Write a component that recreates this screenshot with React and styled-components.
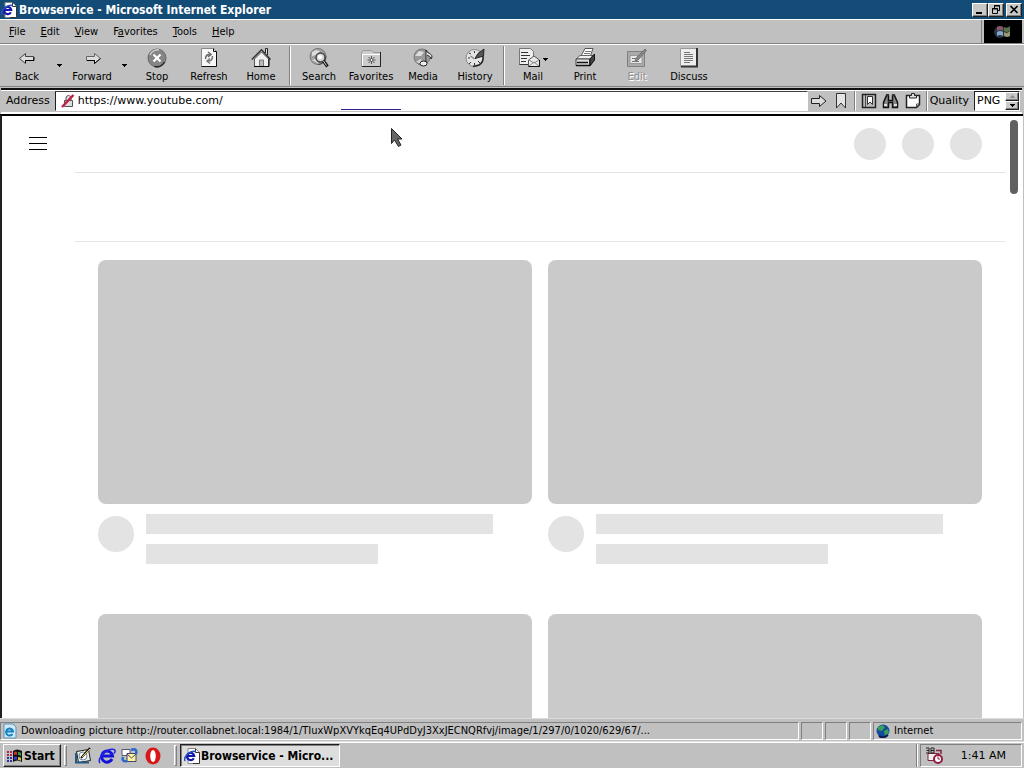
import React from "react";
import styled, { createGlobalStyle, css } from "styled-components";

const condensed = `"DejaVu Sans Condensed", "DejaVu Sans", sans-serif`;
const wide = `"DejaVu Sans", sans-serif`;

const Global = createGlobalStyle`
  * { box-sizing: border-box; }
  body { margin: 0; background: #c0c0c0; color: #000; }
  body, button, input, select {
    font-family: ${condensed};
    font-size: 11px;
    line-height: 14px;
  }
  button { appearance: none; border: 0; padding: 0; margin: 0; background: none; color: inherit; }
  svg { display: block; flex: none; }
`;

const raised = css`
  border: 1px solid;
  border-color: #fff #202020 #202020 #fff;
  box-shadow: inset -1px -1px #808080;
`;

const Desktop = styled.div`
  height: 100vh;
  min-height: 480px;
  display: flex;
  flex-direction: column;
  overflow: hidden;
`;

/* Title bar */
const TitleBar = styled.header`
  flex: none;
  display: flex;
  align-items: center;
  gap: 2px;
  height: 19px;
  padding: 0 2px 0 1px;
  background: #144c78;
  color: #fff;
`;
const Title = styled.h1`
  flex: 1;
  margin: 0;
  font-size: 12px;
  line-height: 18px;
  font-weight: bold;
  white-space: nowrap;
`;
const WindowButtons = styled.div`
  display: flex;
`;
const WindowButton = styled.button`
  display: grid;
  place-items: center;
  width: 16px;
  height: 14px;
  background: #c8c8c8;
  margin-left: ${(p) => (p.$apart ? "2px" : "0")};
  ${raised}
`;

/* Menu */
const MenuRow = styled.div`
  flex: none;
  display: flex;
  height: 25px;
  border-top: 1px solid #fff;
  border-bottom: 1px solid #808080;
`;
const Menu = styled.nav`
  flex: 1;
  display: flex;
  align-items: center;
  gap: 15px;
  padding: 0 9px;
  border-right: 1px solid #808080;
  margin-right: 2px;
`;
const Throbber = styled.div`
  width: 38px;
  margin-right: 2px;
  display: grid;
  place-items: center;
  background: #000;
`;

/* Tool bar */
const ToolBar = styled.div`
  flex: none;
  display: flex;
  height: 43px;
  padding: 1px;
  border-top: 1px solid #fff;
  border-bottom: 1px solid #808080;
`;
const Tool = styled.button`
  position: relative;
  width: 52px;
  display: flex;
  flex-direction: column;
  align-items: center;
  gap: 2px;
  padding-top: 2px;
  color: ${(p) => (p.disabled ? "#909090" : "#000")};
  text-shadow: ${(p) => (p.disabled ? "1px 1px #fff" : "none")};
`;
const DropButton = styled.button`
  width: 13px;
  display: grid;
  place-items: center;
`;
const MailArrow = styled.span`
  position: absolute;
  right: 11px;
  top: 12px;
`;
const Divider = styled.span`
  flex: none;
  width: 2px;
  margin: 0 2px;
  border-left: 1px solid #808080;
  border-right: 1px solid #fff;
`;

/* Address bar */
const AddressBar = styled.form`
  flex: none;
  display: flex;
  align-items: stretch;
  height: 26px;
  margin: 1px 2px 0 1px;
  padding: 1px 2px 1px 5px;
  border-top: 2px solid #101010;
  border-bottom: 2px solid #fff;
  box-shadow: inset 0 1px #fff;
`;
const WideLabel = styled.label`
  display: flex;
  align-items: center;
  font-family: ${wide};
  padding-right: 5px;
`;
const Field = styled.div`
  position: relative;
  flex: 1;
  display: flex;
  align-items: center;
  gap: 3px;
  padding-left: 5px;
  background: #fff;
  border: 1px solid;
  border-color: #404040 #fff #fff #202020;
`;
const UrlInput = styled.input`
  flex: 1;
  min-width: 0;
  border: 0;
  padding: 0;
  background: none;
  outline: none;
  color: #000;
  font-family: ${wide};
`;
const LoadMark = styled.span`
  position: absolute;
  left: 38%;
  bottom: 0;
  width: 8%;
  height: 1px;
  background: #2c1c90;
`;
const IconButton = styled.button`
  width: 22px;
  display: grid;
  place-items: center;
`;
const Quality = styled.div`
  display: flex;
  width: 46px;
  background: #fff;
  border: 1px solid;
  border-color: #202020 #fff #fff #202020;
`;
const QualitySelect = styled.select`
  appearance: none;
  flex: 1;
  min-width: 0;
  border: 0;
  padding: 0 0 0 2px;
  background: none;
  color: #000;
  font-family: ${wide};
`;
const Spinner = styled.div`
  width: 14px;
  display: flex;
  flex-direction: column;
  button { flex: 1; display: grid; place-items: center; background: #c8c8c8; ${raised} }
`;

/* Page */
const Viewport = styled.main`
  position: relative;
  flex: 1;
  min-height: 0;
  overflow: hidden;
  margin-right: 1px;
  background: #fff;
  border-top: 2px solid #000;
  border-left: 2px solid #202020;
`;
const PageHead = styled.div`
  display: flex;
  align-items: center;
  justify-content: space-between;
  height: 56px;
  padding: 0 41px 0 24px;
`;
const HeadDots = styled.div`
  display: flex;
  gap: 16px;
`;
const Dot = styled.span`
  flex: none;
  width: ${(p) => p.$size}px;
  height: ${(p) => p.$size}px;
  border-radius: 50%;
  background: #e3e3e3;
`;
const Chips = styled.div`
  height: 70px;
  margin: 0 17px 0 73px;
  border-top: 1px solid #e4e4e4;
  border-bottom: 1px solid #e8e8e8;
`;
const Grid = styled.div`
  display: grid;
  grid-template-columns: 1fr 1fr;
  gap: 50px 16px;
  padding: 18px 41px 0 96px;
`;
const Thumb = styled.div`
  aspect-ratio: 16 / 9;
  border-radius: 8px;
  background: #cacaca;
`;
const Meta = styled.div`
  display: flex;
  gap: 12px;
  padding-top: 10px;
  ${Dot} { margin-top: 2px; }
`;
const Lines = styled.div`
  flex: 1;
  display: flex;
  flex-direction: column;
  gap: 10px;
`;
const Line = styled.span`
  height: 20px;
  width: ${(p) => p.$width};
  background: #e3e3e3;
`;
const ScrollThumb = styled.div`
  position: absolute;
  top: 4px;
  right: 5px;
  width: 8px;
  height: 74px;
  border-radius: 4px;
  background: #606060;
`;
const Pointer = styled.div`
  position: absolute;
  left: 38%;
  top: 11px;
`;

/* Status bar */
const StatusBar = styled.footer`
  flex: none;
  display: flex;
  gap: 2px;
  height: 24px;
  padding: 3px 2px 1px 0;
  border-top: 1px solid #dcdcdc;
  border-bottom: 1px solid #e0e0e0;
`;
const StatusCell = styled.div`
  display: flex;
  align-items: center;
  gap: 4px;
  flex: ${(p) => (p.$grow ? "1 1 0" : "none")};
  min-width: 0;
  width: ${(p) => (p.$width ? p.$width + "px" : "auto")};
  padding-left: 2px;
  white-space: nowrap;
  overflow: hidden;
  border: 1px solid;
  border-color: #808080 #fff #fff #808080;
`;

/* Task bar */
const TaskBar = styled.footer`
  flex: none;
  display: flex;
  align-items: stretch;
  height: 26px;
  padding: 1px 2px 1px 3px;
  border-top: 1px solid #fff;
`;
const StartButton = styled.button`
  width: 58px;
  display: flex;
  align-items: center;
  gap: 1px;
  padding: 1px 0 0 3px;
  font-size: 12px;
  font-weight: bold;
  ${raised}
`;
const Grip = styled.span`
  width: 3px;
  margin: 1px 3px;
  border: 1px solid;
  border-color: #fff #808080 #808080 #fff;
`;
const QuickLaunch = styled.div`
  display: flex;
  padding: 0 7px 0 2px;
  button { width: 23px; display: grid; place-items: center; }
`;
const TaskButton = styled.button`
  width: 160px;
  display: flex;
  align-items: center;
  gap: 1px;
  padding: 1px 0 0 3px;
  font-size: 12px;
  font-weight: bold;
  white-space: nowrap;
  background: #dedede;
  border: 1px solid;
  border-color: #202020 #fff #fff #202020;
  box-shadow: inset 1px 1px #808080;
`;
const Spacer = styled.div`
  flex: 1;
`;
const Tray = styled.div`
  width: 102px;
  display: flex;
  align-items: center;
  justify-content: space-between;
  padding: 0 15px 0 4px;
  font-family: ${wide};
  border: 1px solid;
  border-color: #808080 #fff #fff #808080;
`;

const Svg = ({ w = 20, h = 20, children }) => (
  <svg width={w} height={h} viewBox={`0 0 ${w} ${h}`} fill="none" aria-hidden="true">
    {children}
  </svg>
);

const DownArrow = () => (
  <Svg w={5} h={3}><path d="M0 0h5v1H4v1H3v1H2V2H1V1H0z" fill="#000" /></Svg>
);
const IeIcon = () => (
  <Svg w={16} h={16}>
    <path d="M4 .5h7.500l4 4v11H4z" fill="#fff" stroke="#888" />
    <path d="M11.500.5v4h4v11H9" stroke="#333" />
    <path d="M9.800 10.200A3.600 3.600 0 1 1 10.200 8H4" stroke="#1616a8" strokeWidth="2.200" />
    <path d="M1 13C-1 9 6 2 11.500 3.500" stroke="#2450c0" strokeWidth="1.500" />
  </Svg>
);
const BigE = () => (
  <Svg w={18} h={18}>
    <path d="M14 12A5.500 5.500 0 1 1 14.500 9H5" stroke="#1414d8" strokeWidth="3" />
    <path d="M2 16C-1 12 8 1 16 2.500c2 1 1 3 0 4" stroke="#2222e8" strokeWidth="1.500" />
  </Svg>
);

const icons = {
  Back: <Svg><path d="M2.500 10.500l6-5v3h8v4h-8v3z" fill="#ddd" stroke="#444" /><path d="M8.500 15v-2.500h8.500V9" stroke="#000" /></Svg>,
  Forward: <Svg><path d="M18.500 10.500l-6-5v3h-8v4h8v3z" fill="#ddd" stroke="#666" /><path d="M5 12.500h7.500v3l6-5" stroke="#000" /></Svg>,
  Stop: <Svg><circle cx="10" cy="10" r="9" fill="#858585" stroke="#666" /><path d="M3 7a8 8 0 0 1 9-5" stroke="#ccc" strokeWidth="1.500" /><path d="M6.500 6.500l7 7m0-7l-7 7" stroke="#fff" strokeWidth="2.200" /><path d="M17.500 14a9 9 0 0 1-10 4.500" stroke="#222" strokeWidth="1.500" /></Svg>,
  Refresh: <Svg><path d="M2.500.5h12l3 3v15h-15z" fill="#f8f8f8" stroke="#888" /><path d="M14.500.5v3h3v15h-15" stroke="#111" /><path d="M6.500 11q0-4.500 4-4.500M9 4l3 2.500L9 9" stroke="#666" strokeWidth="1.500" /><path d="M13.500 8q0 5-4 5M11 10.500L8 13l3 2.500" stroke="#777" strokeWidth="1.500" /></Svg>,
  Home: <Svg><path d="M3.500 11v7.500h14V11l-7-7z" fill="#f0f0f0" stroke="#555" /><path d="M.8 11.500L10.500 1.800l9 9.700" stroke="#333" strokeWidth="1.500" /><path d="M14.500 5V.5h2V7" fill="#ddd" stroke="#222" /><path d="M8.500 18v-6h4v6" fill="#bbb" stroke="#777" /><path d="M3 18.500h15V11" stroke="#000" /></Svg>,
  Search: <Svg><circle cx="9" cy="8.500" r="8" fill="#a0a0a0" stroke="#777" /><path d="M3 4l4-2 4 1-3 4-5 1zM3 12l4-1 3 5z" fill="#ddd" /><path d="M17 8.500a8 8 0 0 1-8 8" stroke="#444" /><circle cx="11.500" cy="9.500" r="4.500" fill="#d6d6d6" stroke="#444" strokeWidth="1.500" /><circle cx="11" cy="9" r="2" fill="#fff" /><path d="M14.500 13l4 5.500" stroke="#111" strokeWidth="3" /><path d="M14.500 13l3 4.500" stroke="#ddd" /></Svg>,
  Favorites: <Svg><path d="M.5 5.500V4l2-1.500h8l2 2h7v14H.5z" fill="#ccc" stroke="#999" /><path d="M1 6.500h18M1.500 6v12" stroke="#fff" /><path d="M19.500 4v14.500H1" stroke="#222" /><path d="M10.500 8v8M6.500 12h8M7.500 9l6 6m0-6l-6 6" stroke="#555" /><path d="M10 11h1v2h-1z" fill="#fff" /></Svg>,
  Media: <Svg><circle cx="9" cy="9" r="8" fill="#999" stroke="#777" /><path d="M2 8l4-5 5 1-3 4zM3 14l5-3 2 5" fill="#ddd" /><path d="M13 15V2c1 4 6 3 6 7l-1 2c0-3-3-3-4-4" fill="#eee" stroke="#222" /><ellipse cx="10.500" cy="15.500" rx="3.500" ry="2.500" fill="#eee" stroke="#222" /></Svg>,
  History: <Svg><circle cx="9.500" cy="10" r="8.500" fill="#e4e4e4" stroke="#888" /><path d="M18 8a9 9 0 0 1-4 9l-6 1.500" stroke="#222" strokeWidth="1.500" /><path d="M10 10.500l3-5 6-4.500-.5 7z" fill="#555" stroke="#222" /><path d="M3 10h2m4.500 7v-2M4 5l2 1M4 16l2-2M15 15l-2-2M9.500 3v2" stroke="#333" /><path d="M9.500 11l-4-3" stroke="#888" strokeWidth="1.500" /></Svg>,
  Mail: <Svg w={28}><path d="M.5.500h11l3 3v13H.5z" fill="#eee" stroke="#777" /><path d="M.5 16.500h14M2 4.500h7M2 7.500h9M2 10.500h6M2 13.500h5" stroke="#333" /><path d="M9.500 12l5.500-4 5.500 4v6.500h-11z" fill="#e8e8e8" stroke="#555" /><path d="M10 18l5-4 5 4M10 12l5 3 5-3" stroke="#888" /><path d="M9.500 18.500h11V12" stroke="#111" /></Svg>,
  Print: <Svg w={20}><path d="M6 8l4-7.500h8L15 9z" fill="#fff" stroke="#555" /><path d="M10 3.500h6M9 5.500h6" stroke="#777" /><path d="M1 11l4-3.500h13L15 11z" fill="#eee" stroke="#666" /><path d="M1 11h13.500v6.500H1z" fill="#ddd" stroke="#444" /><path d="M15 11l4.500-5v6L15 18z" fill="#444" stroke="#111" /><path d="M2 14.500h11M1 17.500h14" stroke="#111" strokeWidth="1.500" /></Svg>,
  Edit: <Svg><path d="M.5 3.500h17v15H.5z" fill="#aaa" stroke="#808080" /><path d="M3 7.500h12v8H3z" fill="#e6e6e6" stroke="#999" /><path d="M5 10.500h4m-4 3h7" stroke="#777" /><path d="M8 13l2-4 8-8 1.500 1.500L11 12z" fill="#888" stroke="#707070" /></Svg>,
  Discuss: <Svg><path d="M1.500 .5h16v18h-16z" fill="#eee" stroke="#999" /><path d="M18 0v18.500H2" stroke="#333" strokeWidth="2" /><path d="M5 4.500h6M5 6.500h9M5 8.500h9M5 10.500h9M5 12.500h9M5 14.500h6" stroke="#777" /></Svg>,
};

const ToolButton = ({ name, disabled, menu }) => (
  <Tool type="button" disabled={disabled}>
    {icons[name]}
    <span>{name}</span>
    {menu && <MailArrow><DownArrow /></MailArrow>}
  </Tool>
);

const menus = [["", "F", "ile"], ["", "E", "dit"], ["", "V", "iew"], ["F", "a", "vorites"], ["", "T", "ools"], ["", "H", "elp"]];

const Card = () => (
  <article>
    <Thumb />
    <Meta>
      <Dot $size={36} />
      <Lines><Line $width="90%" /><Line $width="60%" /></Lines>
    </Meta>
  </article>
);

export default function App() {
  return (
    <Desktop>
      <Global />
      <TitleBar>
        <IeIcon />
        <Title>Browservice - Microsoft Internet Explorer</Title>
        <WindowButtons>
          <WindowButton type="button" aria-label="Minimize"><Svg w={10} h={9}><path d="M1 7h6v2H1z" fill="#000" /></Svg></WindowButton>
          <WindowButton type="button" aria-label="Restore"><Svg w={10} h={9}><path d="M3.500 3V.5h5v5H7M3 1h6M1.500 3.500h5v5h-5zM1 4h6" stroke="#000" /></Svg></WindowButton>
          <WindowButton type="button" aria-label="Close" $apart><Svg w={10} h={9}><path d="M1.500 1l7 7m0-7l-7 7" stroke="#000" strokeWidth="1.700" /></Svg></WindowButton>
        </WindowButtons>
      </TitleBar>

      <MenuRow>
        <Menu>
          {menus.map(([a, b, c]) => (
            <button type="button" key={b + c}>{a}<u>{b}</u>{c}</button>
          ))}
        </Menu>
        <Throbber>
          <Svg w={20} h={18}>
            <circle cx="7" cy="9" r="6" fill="#496b8a" opacity=".5" />
            <path d="M4 4q3-2 6 0v4q-3-2-6 0z" fill="#8a5560" /><path d="M4 9q3-2 6 0v4q-3-2-6 0z" fill="#8ca4c8" />
            <path d="M11 4q3 2 6-1v5q-3 2-6 0z" fill="#56724c" /><path d="M11 9q3 2 6-1v5q-3 2-6 0z" fill="#989870" />
          </Svg>
        </Throbber>
      </MenuRow>

      <ToolBar>
        <ToolButton name="Back" />
        <DropButton type="button" aria-label="Back history"><DownArrow /></DropButton>
        <ToolButton name="Forward" />
        <DropButton type="button" aria-label="Forward history"><DownArrow /></DropButton>
        <ToolButton name="Stop" />
        <ToolButton name="Refresh" />
        <ToolButton name="Home" />
        <Divider />
        <ToolButton name="Search" />
        <ToolButton name="Favorites" />
        <ToolButton name="Media" />
        <ToolButton name="History" />
        <Divider />
        <ToolButton name="Mail" menu />
        <ToolButton name="Print" />
        <ToolButton name="Edit" disabled />
        <ToolButton name="Discuss" />
      </ToolBar>

      <AddressBar onSubmit={(e) => e.preventDefault()}>
        <WideLabel htmlFor="url">Address</WideLabel>
        <Field>
          <Svg w={14} h={14}>
            <path d="M3.500 6.500h8v6h-8zM5 6V4q0-2.500 2.500-2.500T10 4v2" fill="#ddd" stroke="#555" />
            <path d="M1 13L12.500 1" stroke="#c02048" strokeWidth="2.500" />
          </Svg>
          <UrlInput id="url" defaultValue="https://www.youtube.com/" spellCheck={false} />
          <LoadMark />
        </Field>
        <IconButton type="submit" aria-label="Go"><Svg w={16} h={14}><path d="M.5 4.500h8v-3l6.500 5.500-6.500 5.500v-3h-8z" fill="#ddd" stroke="#222" /></Svg></IconButton>
        <IconButton type="button" aria-label="Bookmark"><Svg w={12} h={16}><path d="M1.500.5h9v14.500L6 10l-4.500 5z" fill="#e4e4e4" stroke="#333" /></Svg></IconButton>
        <Divider />
        <IconButton type="button" aria-label="Bookmarks"><Svg w={16} h={16}><path d="M1.500 1.500h13v13h-13z" fill="#bbb" stroke="#222" strokeWidth="1.500" /><path d="M4.500 2v12" stroke="#444" /><path d="M6.500 3.500h5v8L9 9l-2.500 2.500z" fill="#fff" stroke="#333" /></Svg></IconButton>
        <IconButton type="button" aria-label="Find"><Svg w={17} h={16}><path d="M4.500 2.500h2v5h4v-5h2l3 7v5h-5v-5h-4v5h-5v-5z" fill="#888" stroke="#111" strokeWidth="1.500" /><path d="M4 1h3v2H4zM10 1h3v2h-3z" fill="#333" /><path d="M2 11h3v2H2zM12 11h3v2h-3z" fill="#ddd" /></Svg></IconButton>
        <IconButton type="button" aria-label="Clipboard"><Svg w={16} h={16}><path d="M1.500 2.500h13v9l-3 3h-10z" fill="#fff" stroke="#222" strokeWidth="1.500" /><path d="M4.500 5V2.500h2v-2h3v2h2V5z" fill="#ddd" stroke="#222" /><path d="M11.500 14v-3h3" stroke="#555" /></Svg></IconButton>
        <Divider />
        <WideLabel htmlFor="quality">Quality</WideLabel>
        <Quality>
          <QualitySelect id="quality" defaultValue="PNG"><option>PNG</option></QualitySelect>
          <Spinner>
            <button type="button" aria-label="Previous"><Svg w={5} h={3}><path d="M2 0h1v1h1v1h1v1H0V2h1V1h1z" fill="#909090" /></Svg></button>
            <button type="button" aria-label="Next"><DownArrow /></button>
          </Spinner>
        </Quality>
      </AddressBar>

      <Viewport>
        <PageHead>
          <button type="button" aria-label="Guide"><Svg w={24} h={24}><path d="M3 5.500h18M3 11.500h18M3 17.500h18" stroke="#000" /></Svg></button>
          <HeadDots><Dot $size={32} /><Dot $size={32} /><Dot $size={32} /></HeadDots>
        </PageHead>
        <Chips />
        <Grid><Card /><Card /><Card /><Card /></Grid>
        <ScrollThumb />
        <Pointer><Svg w={14} h={22}><path d="M1.500 1.500v15l3-3.500 4 6.500 2.500-1.500-3.500-6h4.500z" fill="#666" stroke="#222" /></Svg></Pointer>
      </Viewport>

      <StatusBar>
        <StatusCell $grow>
          <Svg w={14} h={16}><path d="M1 1h9l3 3v11H1z" fill="#cfeaf6" stroke="#5a94b8" /><path d="M9.500 11A3.500 3.500 0 1 1 10 8.500H4" stroke="#1680c0" strokeWidth="2" /></Svg>
          <span>Downloading picture http://router.collabnet.local:1984/1/TIuxWpXVYkqEq4UPdDyJ3XxJECNQRfvj/image/1/297/0/1020/629/67/...</span>
        </StatusCell>
        <StatusCell $width={22} />
        <StatusCell $width={22} />
        <StatusCell $width={22} />
        <StatusCell $width={149}>
          <Svg w={14} h={14}><circle cx="7" cy="7" r="6.500" fill="#164a9c" /><path d="M2 3l4-2 3 2-3 4-4-1zM8 7l4-2 1 4-4 3z" fill="#38a058" /><path d="M3 12q4 3 9-1" stroke="#0a1c50" strokeWidth="2" /></Svg>
          <span>Internet</span>
        </StatusCell>
      </StatusBar>

      <TaskBar>
        <StartButton type="button">
          <Svg w={16} h={14}>
            <path d="M6 2q4-3 9 0v11q-5-3-9 0z" fill="#111" />
            <path d="M7 3q2-1 3 0v3q-1-1-3 0z" fill="#d03030" /><path d="M11 3q2 0 3 1v3q-1-1-3-1z" fill="#30a040" /><path d="M7 8q2-1 3 0v3q-1-1-3 0z" fill="#3838d0" /><path d="M11 8q2 0 3 1v3q-1-1-3-1z" fill="#d8c030" />
            <path d="M0 3h2m1 0h2M0 6h2m1 0h2" stroke="#b02850" strokeWidth="2" /><path d="M0 9h2m1 0h2M0 12h2m1 0h2" stroke="#3030a0" strokeWidth="2" />
          </Svg>
          Start
        </StartButton>
        <Grip />
        <QuickLaunch>
          <button type="button" aria-label="Show Desktop"><Svg w={17} h={17}><path d="M1.500 4.500l12-2 2 11-12 2z" fill="#e8eee8" stroke="#222" /><path d="M1 6v9.500h13" stroke="#245880" strokeWidth="2" /><circle cx="8" cy="9" r="4" fill="#fff" stroke="#789" /><path d="M6 11L15 1" stroke="#222" strokeWidth="2" /><path d="M7 10l8-8" stroke="#e0c040" /></Svg></button>
          <button type="button" aria-label="Internet Explorer"><BigE /></button>
          <button type="button" aria-label="Outlook Express"><Svg w={17} h={17}><path d="M1 2.500h8v6H1z" fill="#fff" stroke="#557" /><path d="M6 6.500h9v8H6z" fill="#fff4a0" stroke="#446" /><path d="M6 7l4.500 4L15 7" stroke="#446" /><path d="M10 3c5-2 6 1 5 4M6 14c-4 1-5-1-4-4" stroke="#2868d0" strokeWidth="2.500" /></Svg></button>
          <button type="button" aria-label="Opera"><Svg w={16} h={18}><ellipse cx="8" cy="9" rx="7.500" ry="8.500" fill="#d81818" /><ellipse cx="8" cy="9" rx="2.800" ry="6" fill="#fff" /></Svg></button>
        </QuickLaunch>
        <Grip />
        <TaskButton type="button"><IeIcon />Browservice - Micro...</TaskButton>
        <Spacer />
        <Divider />
        <Tray>
          <Svg w={18} h={17}><path d="M3 6.500h11v7H3z" fill="#f4f0f0" stroke="#802040" /><path d="M1 1h3v5H1M1.500 3.500H4M6 1h3v5H6zM6 3.500h3" stroke="#222" /><path d="M11 3.500h5V7" stroke="#802040" strokeWidth="1.500" /><circle cx="13" cy="12" r="4" fill="#fff" stroke="#901c40" strokeWidth="2" /><path d="M13 9.500V12h2" stroke="#901c40" /></Svg>
          <time>1:41 AM</time>
        </Tray>
      </TaskBar>
    </Desktop>
  );
}
